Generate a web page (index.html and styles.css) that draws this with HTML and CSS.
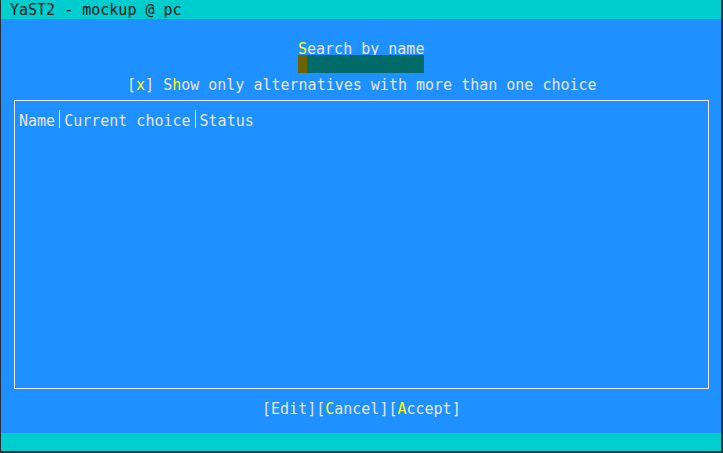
FILE: index.html
```html
<!DOCTYPE html>
<html>
<head>
<meta charset="utf-8">
<link rel="stylesheet" href="styles.css">
</head>
<body>
<div class="term">
  <div class="titlebar"><span class="text">YaST2 - mockup @ pc</span></div>
  <div class="row"></div>
  <div class="row search-label"><span class="hot">S</span>earch by name</div>
  <div class="row search-field"><span class="cursor"></span><span class="field"></span></div>
  <div class="row checkbox">[<span class="hot">x</span>] <span class="hot-char">S</span><span class="hot">h</span>ow only alternatives with more than one choice</div>
  <div class="box">
    <div class="header">Name<span class="sep"></span>Current choice<span class="sep"></span>Status</div>
  </div>
  <div class="row buttons">[Ed<span class="hot">i</span>t][<span class="hot">C</span>ancel][<span class="hot">A</span>ccept]</div>
  <div class="row"></div>
  <div class="statusbar"></div>
</div>
</body>
</html>
```
FILE: styles.css
```css
html, body {
  margin: 0;
  padding: 0;
}
body {
  background: #2b2d38;
  width: 723px;
  height: 453px;
  overflow: hidden;
}
.term {
  width: 720px;
  margin-left: 1px;
  background: #1e90ff;
  color: #e6e6e6;
  font-family: "DejaVu Sans Mono", "Liberation Mono", monospace;
  font-size: 15px;
  display: flex;
  flex-direction: column;
}
.titlebar {
  height: 19px;
  background: #00cdcd;
  color: #1a1a1a;
  line-height: 21px;
  padding-left: 9px;
  white-space: pre;
}
.row {
  height: 18px;
  line-height: 25px;
  white-space: pre;
}
.hot {
  color: #ffff00;
}
.hot-char {
  color: #e6e6e6;
}
.search-label {
  padding-left: 297px;
}
.search-field {
  padding-left: 297px;
  display: flex;
}
.cursor {
  width: 9px;
  height: 18px;
  background: #6e6300;
}
.field {
  width: 117px;
  height: 18px;
  background: #006b68;
}
.checkbox {
  padding-left: 126px;
}
.box {
  margin-left: 13px;
  margin-top: 9px;
  width: 689px;
  height: 279px;
  border: 1px solid #e8e8e8;
  padding: 8px 0 0 4px;
}
.header {
  height: 18px;
  line-height: 25px;
  white-space: pre;
  display: flex;
}
.sep {
  display: inline-block;
  width: 9px;
  height: 18px;
  margin-top: 1px;
  background: linear-gradient(#e8e8e8, #e8e8e8) center / 1px 100% no-repeat;
}
.buttons {
  margin-top: 8px;
  padding-left: 261px;
}
.statusbar {
  height: 18px;
  background: #00cdcd;
}
```
